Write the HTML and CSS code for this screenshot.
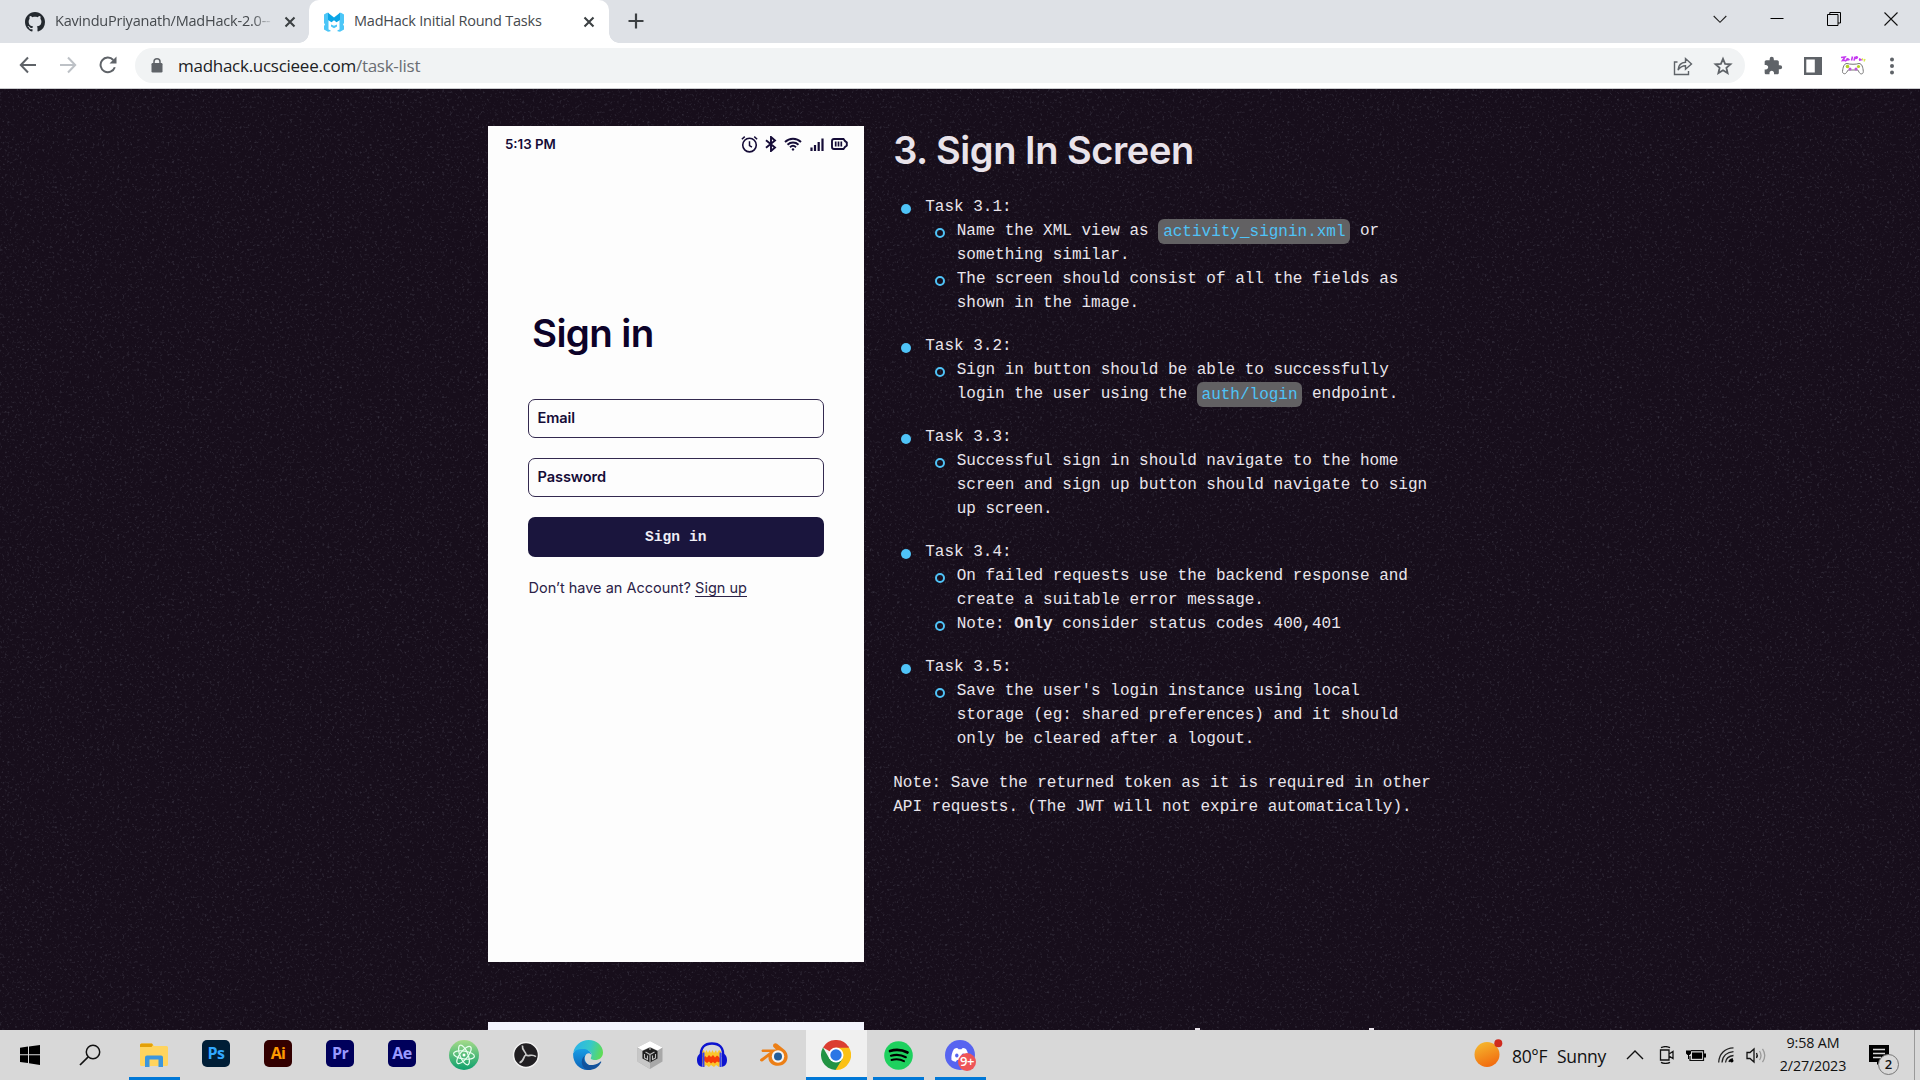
FILE: index.html
```html
<!DOCTYPE html>
<html lang="en">
<head>
<meta charset="utf-8">
<title>MadHack Initial Round Tasks</title>
<link rel="stylesheet" href="styles.css">
</head>
<body>
<header class="browser">
  <div class="tabstrip">
    <div class="tab">
      <svg class="favicon" width="20" height="20" viewBox="0 0 16 16"><path fill="#24292f" d="M8 0C3.58 0 0 3.58 0 8c0 3.54 2.29 6.53 5.47 7.59.4.07.55-.17.55-.38 0-.19-.01-.82-.01-1.49-2.01.37-2.53-.49-2.69-.94-.09-.23-.48-.94-.82-1.13-.28-.15-.68-.52-.01-.53.63-.01 1.08.58 1.23.82.72 1.21 1.87.87 2.33.66.07-.52.28-.87.51-1.07-1.78-.2-3.64-.89-3.64-3.95 0-.87.31-1.59.82-2.15-.08-.2-.36-1.02.08-2.12 0 0 .67-.21 2.2.82.64-.18 1.32-.27 2-.27s1.36.09 2 .27c1.53-1.04 2.2-.82 2.2-.82.44 1.1.16 1.92.08 2.12.51.56.82 1.27.82 2.15 0 3.07-1.87 3.75-3.65 3.95.29.25.54.73.54 1.48 0 1.07-.01 1.93-.01 2.2 0 .21.15.46.55.38A8.01 8.01 0 0 0 16 8c0-4.42-3.58-8-8-8z"/></svg>
      <span class="tab-title tab-title-fade">KavinduPriyanath/MadHack-2.0--</span>
      <svg class="tab-close" width="12" height="12" viewBox="0 0 12 12"><path d="M1.5 1.5l9 9M10.5 1.5l-9 9" stroke="#3c4043" stroke-width="2.1"/></svg>
    </div>
    <div class="tab tab-active">
      <svg class="favicon" width="20" height="20" viewBox="0 0 20 20"><path fill="#4cc6f7" d="M0 2.500L3 .8h1.500V17.500l2 .8v1L4 19.800 0 17.500v-3.500l1-1.500L0 11zM20 2.500L17 .8h-1.500V17.500l-2 .8v1l2.500.5 4-2.300v-3.500l-1-1.500 1-1.500z"/><path fill="#0ba5e6" d="M4 .8l6 4.700 6-4.700v7.200l-3.500 2.200L10 8.200l-2.500 2L4 8z"/><path fill="#4cc6f7" d="M7 12.500l3 1.300 3-1.300v2L10 16.300l-3-1.800z"/></svg>
      <span class="tab-title">MadHack Initial Round Tasks</span>
      <svg class="tab-close" width="12" height="12" viewBox="0 0 12 12"><path d="M1.5 1.5l9 9M10.5 1.5l-9 9" stroke="#3c4043" stroke-width="2.1"/></svg>
    </div>
    <svg class="new-tab" width="16" height="16" viewBox="0 0 16 16"><path d="M8 .5v15M.5 8h15" stroke="#3c4043" stroke-width="2.2"/></svg>
    <div class="window-controls">
      <svg width="14" height="14" viewBox="0 0 14 14"><path d="M.7 4L7 10.300 13.300 4" fill="none" stroke="#222" stroke-width="1.100"/></svg>
      <svg width="14" height="14" viewBox="0 0 14 14"><path d="M.5 6.500h13" stroke="#000"/></svg>
      <svg width="14" height="14" viewBox="0 0 14 14"><path d="M.5 2.500h10.500v11H.5zM2.800 2.500v-2h10.700V11H11" fill="none" stroke="#000"/></svg>
      <svg width="14" height="14" viewBox="0 0 14 14"><path d="M.5 .5l13 13M13.500 .5l-13 13" stroke="#111" stroke-width="1.100"/></svg>
    </div>
  </div>
  <div class="toolbar">
    <div class="nav">
      <svg width="18" height="18" viewBox="0 0 18 18"><path d="M17 9H2M9 1.500L1.800 9 9 16.500" fill="none" stroke="#5f6368" stroke-width="2"/></svg>
      <svg width="18" height="18" viewBox="0 0 18 18"><path d="M1 9h15M9 1.500L16.200 9 9 16.500" fill="none" stroke="#bdc1c6" stroke-width="2"/></svg>
      <svg width="18" height="18" viewBox="0 0 18 18"><path d="M15.800 11.200A7.300 7.300 0 1 1 14.300 4" fill="none" stroke="#5f6368" stroke-width="2"/><path d="M17.500 .5v7h-7z" fill="#5f6368"/></svg>
    </div>
    <div class="omnibox">
      <svg width="12" height="15" viewBox="0 0 12 15"><rect x=".5" y="5" width="11" height="9.500" rx="1.200" fill="#5f6368"/><path d="M3 6V3.800a3 3 0 0 1 6 0V6" fill="none" stroke="#5f6368" stroke-width="1.500"/></svg>
      <span class="url">madhack.ucscieee.com<span class="url-path">/task-list</span></span>
      <svg class="share" width="20" height="20" viewBox="0 0 20 20"><path d="M4.500 6H1.500v12.500h14V15M5 14c.5-5 3-7.500 7.500-7.700V2.500L18.500 8l-6 5.300V9.700C9 9.700 7 11 5 14z" fill="none" stroke="#5f6368" stroke-width="1.400"/></svg>
      <svg width="20" height="20" viewBox="0 0 20 20"><path d="M10 2.800l2.100 5 5.400.5-4.100 3.500 1.200 5.300-4.600-2.800-4.600 2.800 1.200-5.300L2.500 8.300l5.400-.5z" fill="none" stroke="#5f6368" stroke-width="1.800"/></svg>
    </div>
    <div class="extensions">
      <svg width="20" height="20" viewBox="0 0 24 24"><path fill="#5f6368" d="M20.500 11H19V7c0-1.100-.9-2-2-2h-4V3.500a2.500 2.500 0 0 0-5 0V5H4c-1.100 0-1.990.9-1.990 2v3.800H3.500c1.490 0 2.700 1.210 2.700 2.700s-1.210 2.700-2.700 2.700H2V20c0 1.100.9 2 2 2h3.800v-1.500c0-1.490 1.210-2.700 2.700-2.700s2.700 1.210 2.700 2.700V22H17c1.100 0 2-.9 2-2v-4h1.500a2.500 2.500 0 0 0 0-5z"/></svg>
      <svg width="18" height="18" viewBox="0 0 18 18"><path fill="#5f6368" fill-rule="evenodd" d="M0 0h18v18H0zM2.300 2.500v13h8.500v-13z"/></svg>
      <svg width="26" height="20" viewBox="0 0 26 20"><path d="M1 1.500l4-.5-2.500 3.500 3-.2M7.500 2L6.500 4.300l2-1 1 .8M12.500 .5l-1 4M15 .8l-1 3.800M15.500 1c3-.5 2 1.500-.5 1.500M19 2.800l2 1-2 .5" stroke="#c53bf0" stroke-width="1.600" fill="none"/><path d="M22 2.500l1 1.500M25 3l-1 2.500" stroke="#d9e84a" stroke-width="1.400"/><path d="M7 7.500c3 1 9 1 12 0 3 0 4 4 4.300 8 0 3-3 3-4 1l-1.500-2.500H8.200L6.500 16.500c-1.300 2-4 1.500-4-1C3 11 4 7.500 7 7.500z" fill="#fff" stroke="#777"/><circle cx="7.500" cy="10.500" r="1.800" fill="#b5cf27"/><circle cx="18.500" cy="10.500" r="1.600" fill="#b5cf27"/><circle cx="10" cy="13" r="1.500" fill="#bf54d8"/><circle cx="16" cy="13" r="1.500" fill="#bf54d8"/></svg>
      <svg width="6" height="18" viewBox="0 0 6 18"><g fill="#5f6368"><circle cx="3" cy="2.500" r="2"/><circle cx="3" cy="9" r="2"/><circle cx="3" cy="15.500" r="2"/></g></svg>
    </div>
  </div>
</header>

<main class="page">
  <svg class="grain" width="1920" height="941">
    <filter id="grain" x="0" y="0" width="100%" height="100%" color-interpolation-filters="sRGB">
      <feTurbulence type="fractalNoise" baseFrequency=".4" numOctaves="2" seed="7"/>
      <feColorMatrix values="0 0 0 0 .5  0 0 0 0 .52  0 0 0 0 .58  .9 0 0 0 -.52"/>
    </filter>
    <rect width="1920" height="941" filter="url(#grain)"/>
  </svg>
  <section class="task">
    <div class="phone">
      <div class="phone-status">
        <span>5:13 PM</span>
        <div class="phone-icons">
          <svg width="17" height="18" viewBox="0 0 16 17"><circle cx="8" cy="9.500" r="6.400" fill="none" stroke="#150c37" stroke-width="1.500"/><path d="M8 6v4l2.300 1.500M.8 4L3.500 1.500M15.200 4l-2.700-2.500" fill="none" stroke="#150c37" stroke-width="1.400"/></svg>
          <svg width="12" height="16" viewBox="0 0 12 16"><path d="M1 4.200l9 7.300L6 15V1l4 3.500-9 7.300" fill="none" stroke="#150c37" stroke-width="1.900"/></svg>
          <svg width="18" height="14" viewBox="0 0 18 14"><path d="M1 5a11.500 11.500 0 0 1 16 0M3.500 7.700a8 8 0 0 1 11 0M6 10.200a4.500 4.500 0 0 1 6 0" fill="none" stroke="#150c37" stroke-width="1.900"/><circle cx="9" cy="12.400" r="1.200" fill="#150c37"/></svg>
          <svg width="14" height="13" viewBox="0 0 14 13"><path d="M1.500 9.500V13M5 7v6M8.700 4v9M12.500 .5V13" stroke="#150c37" stroke-width="2.200"/></svg>
          <svg width="17" height="12" viewBox="0 0 17 12"><path d="M3 1h9.500L14 3l1.800 1.500v3L14 9l-1.500 2H3Q1 11 1 9V3q0-2 2-2z" fill="none" stroke="#150c37" stroke-width="1.900"/><path d="M4.700 3.500v5M7.500 3.500v5M10.300 3.500v5" stroke="#150c37" stroke-width="1.700"/></svg>
        </div>
      </div>
      <h3 class="phone-title">Sign in</h3>
      <div class="field">Email</div>
      <div class="field">Password</div>
      <div class="phone-button">Sign in</div>
      <p class="signup">Don’t have an Account? <span class="signup-link">Sign up</span></p>
    </div>
    <article class="notes">
      <h2>3. Sign In Screen</h2>
      <ul class="tasks">
        <li>Task 3.1:
          <ul>
            <li>Name the XML view as <code>activity_signin.xml</code> or<br>something similar.</li>
            <li>The screen should consist of all the fields as<br>shown in the image.</li>
          </ul>
        </li>
        <li>Task 3.2:
          <ul><li>Sign in button should be able to successfully<br>login the user using the <code>auth/login</code> endpoint.</li></ul>
        </li>
        <li>Task 3.3:
          <ul><li>Successful sign in should navigate to the home<br>screen and sign up button should navigate to sign<br>up screen.</li></ul>
        </li>
        <li>Task 3.4:
          <ul>
            <li>On failed requests use the backend response and<br>create a suitable error message.</li>
            <li>Note: <b>Only</b> consider status codes 400,401</li>
          </ul>
        </li>
        <li>Task 3.5:
          <ul><li>Save the user's login instance using local<br>storage (eg: shared preferences) and it should<br>only be cleared after a logout.</li></ul>
        </li>
      </ul>
      <p>Note: Save the returned token as it is required in other<br>API requests. (The JWT will not expire automatically).</p>
    </article>
  </section>
  <section class="next-task">
    <div class="next-phone"></div>
    <div class="next-heading"><i></i><i></i></div>
  </section>
</main>

<footer class="taskbar">
  <div class="start"><svg width="20" height="20" viewBox="0 0 20 20"><path d="M0 2.700l8-1.100v7.700H0zM9 1.400L20 0v9.300H9zM0 10.300h8V18l-8-1.100zM9 10.300h11V20L9 18.300z"/></svg></div>
  <div class="start"><svg width="22" height="22" viewBox="0 0 22 22"><circle cx="14" cy="8" r="6.700" fill="none" stroke="#111" stroke-width="1.500"/><path d="M9.200 12.800L1 21" stroke="#111" stroke-width="1.700"/></svg></div>
  <div class="apps">
    <div class="app running"><svg width="28" height="24" viewBox="0 0 28 24"><path d="M0 2q0-1.500 1.500-1.500H12L14 3h12.500Q28 3 28 4.500v17q0 1.500-1.500 1.500h-25Q0 23 0 21.500z" fill="#ffd45e"/><path d="M0 4V2Q0 .5 1.500 .5H12l1 1.500-1.500 2z" fill="#e3a008"/><path d="M5 24V14.500Q5 12.500 7 12.500h14q2 0 2 2V24h-4.500v-7.500h-9V24z" fill="#3b96dd"/></svg></div>
    <div class="app"><span class="adobe ps">Ps</span></div>
    <div class="app"><span class="adobe ai">Ai</span></div>
    <div class="app"><span class="adobe pr">Pr</span></div>
    <div class="app"><span class="adobe ae">Ae</span></div>
    <div class="app"><svg width="30" height="30" viewBox="0 0 30 30"><defs><linearGradient id="atom" x2="0" y2="1"><stop stop-color="#a5db8a"/><stop offset="1" stop-color="#0da06c"/></linearGradient></defs><circle cx="15" cy="15" r="15" fill="url(#atom)"/><g fill="none" stroke="#e9fff0" stroke-width="1.200"><ellipse cx="15" cy="15" rx="10.500" ry="4" transform="rotate(8 15 15)"/><ellipse cx="15" cy="15" rx="10.500" ry="4" transform="rotate(68 15 15)"/><ellipse cx="15" cy="15" rx="10.500" ry="4" transform="rotate(128 15 15)"/></g><circle cx="15" cy="15" r="1.500" fill="#fff"/></svg></div>
    <div class="app"><svg width="28" height="28" viewBox="0 0 28 28"><circle cx="14" cy="14" r="12.500" fill="#211f22" stroke="#f2f2f2" stroke-width="1.500"/><g fill="none" stroke="#c9c9c9" stroke-width="1.700"><path d="M14 14C14.500 10.500 9.500 10 10.500 4.500"/><path d="M14 14C14.500 10.500 9.500 10 10.500 4.500" transform="rotate(120 14 14)"/><path d="M14 14C14.500 10.500 9.500 10 10.500 4.500" transform="rotate(240 14 14)"/></g></svg></div>
    <div class="app"><svg width="30" height="30" viewBox="0 0 30 30"><defs><linearGradient id="edgeTop" x1="0" x2="1" y1=".3" y2=".5"><stop stop-color="#2ab2ea"/><stop offset=".55" stop-color="#37c8c9"/><stop offset="1" stop-color="#5fdc55"/></linearGradient><linearGradient id="edgeBody" x2="0" y2="1"><stop stop-color="#1a9de5"/><stop offset="1" stop-color="#0b62b8"/></linearGradient></defs><path d="M.4 12C2 5 8 0 15.500 0 24 0 30 6 30 12.500c0 5-4 7.500-8 7.500-3 0-5-1-4-2.500 2-4-1-7.500-6-7.500-5 0-9 1-11.600 2z" fill="url(#edgeTop)"/><path d="M.2 13C2 10 6 8.500 10.500 9c4 0 7.500 2.500 8 6-1-2-3.500-2.500-5-1-4 4-1 12 8 13-2 2-4.500 3-7 3C6 30-.8 22 .2 13z" fill="url(#edgeBody)"/><path d="M12 15.500c-3 5 1 10.500 8 9.500 3-.3 6-2 7.500-3.500.5-.3 1 .2.700.7C25.500 27.500 21 30 15 30 9 29 6 20 12 15.500z" fill="#12529c"/></svg></div>
    <div class="app"><svg width="26" height="28" viewBox="0 0 26 28"><path d="M13 0l12.500 6.500v14L13 28 .5 20.500v-14z" fill="#a8a8a8"/><path d="M13 0l12.500 6.500-5 3L13 6 5.500 9.500l-5-3z" fill="#fff"/><path d="M.5 7v13.500L13 28v-7l-7.500-4V9.500z" fill="#c7c7c7"/><path d="M13 6.500l7.500 3.500V17.500L13 21.500 5.500 17.500V10z" fill="#1f1f1f"/><path d="M13 13.500V21M13 13.500L8.500 11M13 13.500l4.500-2.500M7.500 13v4l3 1.500v-4M18.500 13v4l-3 1.500v-4M13 6v3" stroke="#bdbdbd" stroke-width="1.100" fill="none"/></svg></div>
    <div class="app"><svg width="30" height="26" viewBox="0 0 30 26"><path d="M5 20V9l2-1 1 3 1.500-3L11 11l1.500-3 1.500 3 1.500-3 1.500 3 2-3 1 3 2-3 2 1.500V20l-2 5-3-2-2 2-3-2-2 2-3-2-2 2z" fill="#fbc62c"/><path d="M6 17l2-3 2 1.500 2-2.500 2 2 2-2 2 2.500 2-2 2 1.500 2 3-2 2.500-2-1-2 2-2-1.500-2 1.500-2-2-2 1.500-2-1.500z" fill="#f63c08"/><path d="M4 15C3 5 8 1.500 15 1.500S27 5 26 15" fill="none" stroke="#0d14cf" stroke-width="2.400"/><path d="M5.500 11v14C1 24 0 21 0 18s1-6 5.500-7zM24.500 11v14c4.500-1 5.500-4 5.500-7s-1-6-5.500-7z" fill="#0d14cf"/><path d="M6.700 10.500V25M23.300 10.500V25" stroke="#3544ef" stroke-width="1.500"/></svg></div>
    <div class="app"><svg width="28" height="24" viewBox="0 0 28 24"><path d="M14 .8c.8-.8 2-.8 3 0l8 6.500c5 5 3 15-7 15.500-6 0-10-4-9.500-9L3 18c-2 1.500-4-.5-2.500-2L10 9H3c-2 0-2-2.500 0-2.500h13l-2.500-2.500c-.8-1-.5-2.500.5-3.200z" fill="#ec7f16"/><circle cx="18" cy="13.500" r="6.200" fill="#f3f3f3"/><circle cx="18" cy="13.500" r="4" fill="#235d98"/></svg></div>
    <div class="app running current"><svg width="30" height="30" viewBox="0 0 30 30"><path d="M2 7.500A15 15 0 0 1 28 7.500L15 15z" fill="#db3e31"/><path d="M28 7.500A15 15 0 0 1 14.500 30L15 15V7.500z" fill="#fbc116"/><path d="M14.500 30A15 15 0 0 1 2 7.500L8.500 18.750 21.500 18.750z" fill="#229342"/><path d="M15 7.500h13L27 6H10z" fill="#db3e31"/><circle cx="15" cy="15" r="7.500" fill="#fff"/><circle cx="15" cy="15" r="5.700" fill="#2b76e5"/></svg></div>
    <div class="app running"><svg width="29" height="29" viewBox="0 0 29 29"><circle cx="14.500" cy="14.500" r="14.300" fill="#1ed15e"/><g fill="none" stroke="#000" stroke-linecap="round"><path d="M6 10c6-1.800 12-1.300 17.500 1.500" stroke-width="2.700"/><path d="M7 14.700c5-1.500 10.500-.9 14.800 1.500" stroke-width="2.200"/><path d="M7.500 19c4.500-1.200 9-.7 12.500 1.200" stroke-width="1.900"/></g></svg></div>
    <div class="app running"><div class="discord"><svg width="30" height="30" viewBox="0 0 30 30"><circle cx="15" cy="15" r="15" fill="#5764f0"/><path d="M9 9c2-1.200 3.500-1.300 4-.5l.5.800h3l.5-.800c.5-.8 2-.7 4 .5 2 3 3 7 2.500 11-2 1.500-4 2-4.500 1.500l-1-1.500h-6l-1 1.500c-.5.5-2.500 0-4.500-1.500C6 16 7 12 9 9z" fill="#fff"/><ellipse cx="11.800" cy="15.500" rx="1.700" ry="2" fill="#5764f0"/><ellipse cx="18.200" cy="15.500" rx="1.700" ry="2" fill="#5764f0"/></svg><span class="badge">9+</span></div></div>
  </div>
  <div class="tray">
    <div class="weather">
      <svg width="29" height="29" viewBox="0 0 29 29"><defs><linearGradient id="sun" x1=".2" y1="0" x2=".6" y2="1"><stop stop-color="#f5b92f"/><stop offset="1" stop-color="#f26a0e"/></linearGradient></defs><circle cx="13" cy="15.500" r="12.500" fill="url(#sun)"/><circle cx="24.300" cy="4.200" r="4" fill="#cf2a1e"/></svg>
      <span class="temp">80°F</span><span>Sunny</span>
    </div>
    <svg class="chevron" width="18" height="10" viewBox="0 0 18 10"><path d="M1 9l8-8 8 8" fill="none" stroke="#111" stroke-width="1.400"/></svg>
    <svg class="cam" width="16" height="18" viewBox="0 0 16 18"><path d="M1.500 4h8.500v10H1.500zM10 8l4-2.500v7L10 10M2 1.700c3-1.500 6-1.500 9 0M2 16.300c3 1.500 6 1.500 9 0" fill="none" stroke="#111" stroke-width="1.300"/></svg>
    <svg class="battery" width="20" height="14" viewBox="0 0 20 14"><path d="M5 2.700h12.500v9.800H4V8" fill="none" stroke="#111" stroke-width="1.200"/><path d="M6 4.500h10v6.300H6z"/><path d="M18 5.500h2v4h-2zM1 .5v2M4 .5v2M0 2.500h5v3L3.500 7h-2L0 5.500zM2 6h1v5H2z"/></svg>
    <svg class="wifi" width="16" height="16" viewBox="0 0 16 16"><g fill="none" stroke="#222" stroke-width="1.300"><path d="M.7 15.500C1 7 7 1 15.500 .8M4 15.500C4.500 9 9 5 15.500 4.600M7.500 15.500c.5-4 3-6.500 8-7"/><path d="M11 15c.3-1.500 1.500-3 4-3" stroke="#111"/></g><circle cx="13.700" cy="13.700" r="1.800"/></svg>
    <svg width="21" height="17" viewBox="0 0 21 17"><path d="M1 5.500h3L8 2v13l-4-3.500H1z" fill="none" stroke="#111" stroke-width="1.300"/><path d="M10.500 6q1.500 2.500 0 5" fill="none" stroke="#111" stroke-width="1.300"/><path d="M13.500 4q3 4.500 0 9M16.500 1.800q4.500 6.700 0 13.400" fill="none" stroke="#999" stroke-width="1.300"/></svg>
    <div class="clock"><span>9:58 AM</span><span>2/27/2023</span></div>
    <div class="notifications"><svg width="20" height="20" viewBox="0 0 20 20"><path d="M0 0h20v17h-9L8 20v-3H0z"/><path d="M4 4.500h12M4 8.500h12M4 12.500h8" stroke="#d8d8d8" stroke-width="1.300"/></svg><span class="count">2</span></div>
    <div class="show-desktop"></div>
  </div>
</footer>
</body>
</html>
```
FILE: styles.css
```css
*, *::before, *::after { box-sizing: border-box; }
body {
  margin: 0;
  width: 1920px;
  height: 1080px;
  overflow: hidden;
  display: flex;
  flex-direction: column;
  font-family: "Open Sans", sans-serif;
}
svg { display: block; flex: none; }
h2, h3, p, ul { margin: 0; padding: 0; font-weight: inherit; }

/* Browser chrome */
.browser { height: 89px; flex: none; background: #fff; border-bottom: 1px solid #c9cacd; }
.tabstrip { height: 43px; display: flex; background: #dee1e6; }
.tab {
  width: 309px;
  height: 43px;
  padding: 0 13px 0 25px;
  display: flex;
  align-items: center;
  font-size: 14.5px;
  letter-spacing: -0.22px;
  color: #45494d;
}
.tab-active {
  position: relative;
  width: 300px;
  padding: 0 14px 0 15px;
  background: #fff;
  border-radius: 10px 10px 0 0;
}
.tab-active::before, .tab-active::after {
  content: "";
  position: absolute;
  bottom: 0;
  width: 10px;
  height: 10px;
}
.tab-active::before { left: -10px; background: radial-gradient(circle at 0 0, transparent 9.5px, #fff 10px); }
.tab-active::after { right: -10px; background: radial-gradient(circle at 100% 0, transparent 9.5px, #fff 10px); }
.favicon { margin-right: 10px; }
.tab-title { flex: 1; white-space: nowrap; overflow: hidden; line-height: 22px; padding-bottom: 1px; }
.tab-title-fade { margin-right: 10px; -webkit-mask-image: linear-gradient(90deg, #000 90%, transparent); mask-image: linear-gradient(90deg, #000 90%, transparent); }
.new-tab { margin: 13px 0 0 19px; }
.window-controls { margin: 12px 22px 0 auto; display: flex; gap: 43px; }

.toolbar { height: 45px; padding-top: 5px; display: flex; }
.nav { width: 135px; height: 34px; padding-left: 19px; display: flex; align-items: center; gap: 22px; }
.omnibox {
  width: 1610px;
  height: 35px;
  padding: 0 12px 0 16px;
  display: flex;
  align-items: center;
  background: #f1f3f4;
  border-radius: 18px;
}
.url { margin-left: 15px; font-size: 17px; letter-spacing: -0.27px; line-height: 24px; color: #202124; }
.url-path { color: #6a6e73; }
.share { margin: 0 20px 0 auto; }
.extensions { height: 35px; margin-left: 18px; display: flex; align-items: center; }
.extensions svg:nth-child(2) { margin-left: 21px; }
.extensions svg:nth-child(3) { margin-left: 18px; }
.extensions svg:nth-child(4) { margin-left: 23px; }

/* Web page */
.page { position: relative; height: 941px; padding: 37px 0 0 488px; overflow: hidden; background: #170e1b; }
.grain { position: absolute; left: 0; top: 0; }
.task { position: relative; display: flex; gap: 29.2px; }
.phone { width: 376px; height: 836px; padding: 0 40px 0 39.5px; background: #fdfdfd; color: #150c37; font-family: Inter, sans-serif; }
.phone-status {
  height: 36px;
  margin: 0 -24px 0 -22.5px;
  display: flex;
  justify-content: space-between;
  align-items: center;
  font-size: 13.3px;
  font-weight: 600;
}
.phone-icons { display: flex; align-items: center; gap: 7.3px; }
.phone-title {
  margin: 148px 0 43px 4.5px;
  font-size: 38.5px;
  line-height: 46px;
  font-weight: 600;
  letter-spacing: -0.65px;
  color: #0c0228;
}
.field {
  height: 39px;
  margin-bottom: 20px;
  padding-left: 9px;
  border: 1.5px solid #33294f;
  border-radius: 7px;
  font-size: 14.6px;
  line-height: 37px;
  font-weight: 600;
  letter-spacing: -0.1px;
}
.phone-button {
  height: 40px;
  border-radius: 7px;
  background: #1a153d;
  color: #f0eef6;
  font: bold 14.6px/41px "Liberation Mono", monospace;
  text-align: center;
}
.signup { margin: 19.5px 0 0 1px; font-size: 14.5px; line-height: 22px; white-space: nowrap; color: #2b2247; }
.signup-link { border-bottom: 1px solid #2b2247; }

.notes { width: 560px; color: #e9e5ec; font: 16px/24px "Liberation Mono", monospace; white-space: nowrap; }
.notes h2 {
  margin-bottom: 21px;
  font: 600 38px/48px Inter, sans-serif;
  letter-spacing: -0.45px;
  color: #e9e3ea;
}
.tasks, .tasks ul { list-style: none; }
.tasks > li { margin-bottom: 19px; padding-left: 32px; }
.tasks ul li { padding-left: 31.5px; }
.tasks > li::before, .tasks ul li::before {
  content: "";
  float: left;
  width: 10px;
  height: 10px;
  border-radius: 50%;
  margin: 9px 0 0 -24.500px;
  background: #4fc3f7;
}
.tasks > li::before { margin-right: 14px; }
.tasks ul li::before { margin-left: -21.500px; background: none; border: 2px solid #4fc3f7; }
.tasks > li:last-child { margin-bottom: 19.5px; }
.notes code {
  padding: 3.5px 4.8px;
  border-radius: 6px;
  background: #626163;
  color: #4fc3f7;
  font: 16px "Liberation Mono", monospace;
}

.next-task { position: relative; margin-top: 60px; display: flex; }
.next-phone { width: 376px; height: 40px; background: #f3f4fd; }
.next-heading { margin: 6px 0 0 331px; display: flex; gap: 169px; }
.next-heading i { width: 5px; height: 4px; background: #e9e3ea; }

/* Taskbar */
.taskbar { height: 50px; flex: none; display: flex; background: #d8d8d8; color: #111; }
.start { width: 60px; height: 50px; display: flex; align-items: center; justify-content: center; }
.apps { margin-left: 3px; display: flex; }
.app { width: 62px; height: 50px; display: flex; align-items: center; justify-content: center; }
.app.running { background: linear-gradient(#0078d7, #0078d7) 50% 100% / 51px 3px no-repeat; }
.app.current { background: linear-gradient(#0078d7, #0078d7) 1px 100% / 61px 3px no-repeat, linear-gradient(90deg, transparent 1px, #f0f0f0 1px); }
.adobe {
  width: 28px;
  height: 27px;
  margin-bottom: 3px;
  border-radius: 5px;
  font-size: 16px;
  font-weight: 700;
  line-height: 26px;
  letter-spacing: -0.6px;
  text-align: center;
}
.ps { background: #001e36; color: #31a8ff; }
.ai { background: #330000; color: #ff9a00; }
.pr, .ae { background: #00005b; color: #9999ff; }
.discord { position: relative; }
.badge {
  position: absolute;
  left: 13px;
  top: 13px;
  width: 18px;
  height: 18px;
  border-radius: 50%;
  background: #ee5558;
  color: #fff;
  font-size: 13px;
  font-weight: 600;
  line-height: 17px;
  letter-spacing: -0.5px;
  text-align: center;
}
.tray { margin-left: auto; display: flex; align-items: center; }
.weather { display: flex; align-items: center; font-size: 17.5px; letter-spacing: -0.35px; width: 152px; white-space: nowrap; }
.weather svg { margin: -3px 9px 0 0; }
.weather span { padding-top: 2px; }
.temp { width: 45px; }
.chevron { margin-right: 15px; }
.cam { margin-right: 11px; }
.battery { margin-right: 12px; }
.wifi { margin-right: 12px; }
.clock { width: 92px; padding-bottom: 2px; display: flex; flex-direction: column; align-items: center; font-size: 14.300px; line-height: 23px; letter-spacing: -0.15px; }
.notifications { position: relative; width: 20px; margin-left: 10px; }
.count {
  position: absolute;
  left: 9px;
  top: 9px;
  width: 21px;
  height: 21px;
  border: 1px solid #777;
  border-radius: 50%;
  background: #d8d8d8;
  font-size: 13px;
  font-weight: 600;
  line-height: 19px;
  text-align: center;
}
.show-desktop { width: 6px; height: 50px; margin-left: 25px; border-left: 1px solid #999; }
```
